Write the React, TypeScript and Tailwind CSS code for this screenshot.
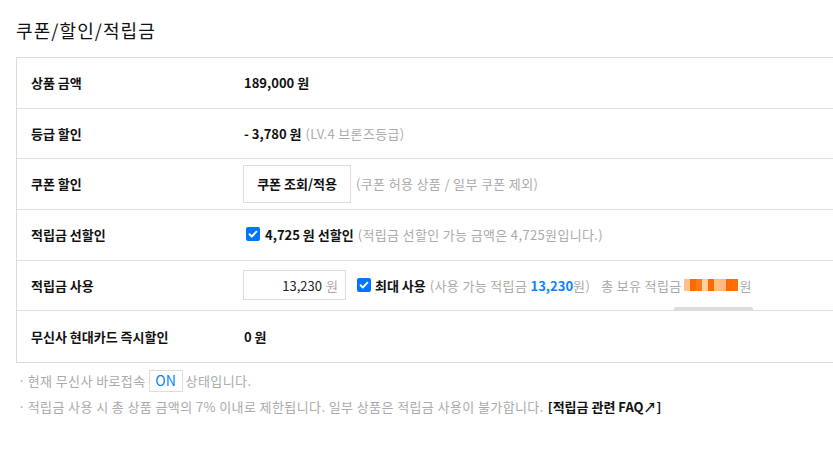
import React from 'react';

const font = { fontFamily: '"Noto Sans CJK KR", "Noto Sans", sans-serif' };

const Check: React.FC = () => (
  <span className="inline-flex w-[14px] h-[14px] shrink-0 items-center justify-center rounded-[2px] bg-[#0075ff]">
    <svg viewBox="0 0 14 14" className="w-[12px] h-[12px]" fill="none" stroke="white" strokeWidth={2.2} strokeLinecap="round" strokeLinejoin="round">
      <path d="M3 7.3l2.6 2.6L11 4.3" />
    </svg>
  </span>
);

const Row: React.FC<{ label: string; children: React.ReactNode; last?: boolean }> = ({ label, children, last }) => (
  <div className={`box-border flex items-center h-[50.67px] ${last ? '' : 'border-b border-[#e0e0e0]'}`}>
    <div className="w-[227px] shrink-0 pl-[14px] text-[13px] font-bold text-[#111]">{label}</div>
    <div className="flex items-center text-[13px]">{children}</div>
  </div>
);

const Blurred: React.FC = () => {
  const blocks = ['#ff9a3c', '#ff6a00', '#ff7a1a', '#ffb060', '#ff6a00', '#ffc080', '#ff8a30', '#ff6a00', '#ff7000'];
  return (
    <span className="inline-flex items-center h-[12px] mx-[2px]">
      {blocks.map((c, i) => (
        <span key={i} className="inline-block w-[6px] h-[12px]" style={{ backgroundColor: c, opacity: i % 3 === 0 ? 0.6 : 1 }} />
      ))}
    </span>
  );
};

export default function App() {
  return (
    <div className="w-[833px] h-[471px] overflow-hidden bg-white" style={font}>
      <div className="pl-[16px] pt-[17px]">
        <h2 className="text-[18px] leading-[26px] tracking-[1.1px] text-[#111] font-normal">쿠폰/할인/적립금</h2>
        <div className="mt-[14px] w-[840px] border border-[#dcdcdc]">
          <Row label="상품 금액">
            <span className="font-bold text-[#111]">189,000 원</span>
          </Row>
          <Row label="등급 할인">
            <span className="font-bold text-[#111]">- 3,780 원</span>
            <span className="ml-[4px] tracking-[0.35px] text-[#aaa]">(LV.4 브론즈등급)</span>
          </Row>
          <Row label="쿠폰 할인">
            <button className="-ml-[1px] w-[108px] h-[38px] border border-[#ddd] bg-white font-bold text-[13px] text-[#111]">쿠폰 조회/적용</button>
            <span className="ml-[5px] tracking-[0.35px] text-[#aaa]">(쿠폰 허용 상품 / 일부 쿠폰 제외)</span>
          </Row>
          <Row label="적립금 선할인">
            <span className="ml-[2px]"><Check /></span>
            <span className="ml-[5px] font-bold text-[#111]">4,725 원 선할인</span>
            <span className="ml-[4px] tracking-[0.35px] text-[#aaa]">(적립금 선할인 가능 금액은 4,725원입니다.)</span>
          </Row>
          <Row label="적립금 사용">
            <div className="-ml-[1px] flex items-center justify-end w-[103px] h-[30px] border border-[#ddd] pr-[7px]">
              <span className="text-[#222]">13,230</span>
              <span className="ml-[4px] text-[#aaa]">원</span>
            </div>
            <span className="ml-[11px]"><Check /></span>
            <span className="ml-[4px] font-bold text-[#111]">최대 사용</span>
            <span className="ml-[4px] tracking-[0.35px] text-[#aaa]">
              (사용 가능 적립금 <span className="font-bold tracking-normal text-[#0a84ff]">13,230</span>원)
            </span>
            <span className="relative ml-[11px] flex items-center tracking-[0.35px] text-[#aaa]">
              총 보유 적립금
              <Blurred />
              원
              <span className="absolute left-[73px] top-[31px] w-[79px] h-[4px] bg-[#dcdcdc] rounded-t-[2px]" />
            </span>
          </Row>
          <Row label="무신사 현대카드 즉시할인" last>
            <span className="font-bold text-[#111]">0 원</span>
          </Row>
        </div>
        <div className="mt-[7px] flex items-center text-[13px] tracking-[0.4px] text-[#aaa]">
          <span className="ml-[2px] mr-[2px]">·</span>
          <span>현재 무신사 바로접속</span>
          <span className="mx-[3px] inline-flex items-center justify-center w-[34px] h-[22px] border border-[#ddd] text-[14px] tracking-normal text-[#0a84ff]">ON</span>
          <span>상태입니다.</span>
        </div>
        <div className="mt-[5px] flex items-center text-[13px] tracking-[0.4px] text-[#aaa]">
          <span className="ml-[2px] mr-[2px]">·</span>
          <span>적립금 사용 시 총 상품 금액의 7% 이내로 제한됩니다. 일부 상품은 적립금 사용이 불가합니다.</span>
          <span className="ml-[4px] font-bold tracking-normal text-[#111]">[적립금 관련 FAQ↗]</span>
        </div>
      </div>
    </div>
  );
}
